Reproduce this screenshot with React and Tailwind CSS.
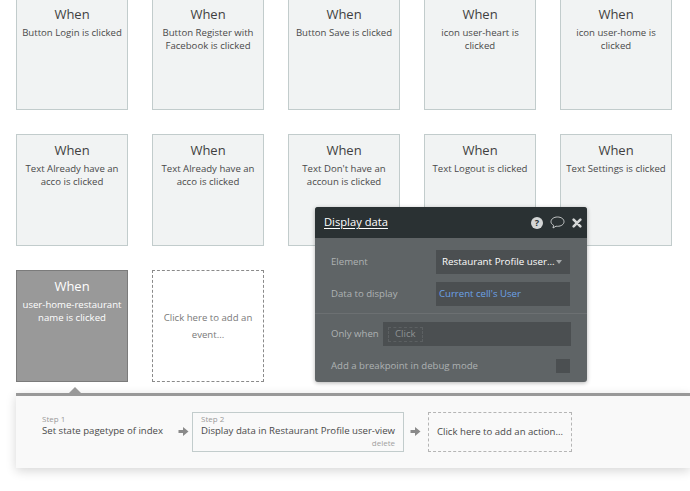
import React from "react";

const cards = [
  "Button Login is clicked",
  "Button Register with Facebook is clicked",
  "Button Save is clicked",
  "icon user-heart is clicked",
  "icon user-home is clicked",
  "Text Already have an acco is clicked",
  "Text Already have an acco is clicked",
  "Text Don't have an accoun is clicked",
  "Text Logout is clicked",
  "Text Settings is clicked",
];

function Card({ label }) {
  return (
    <div className="w-[112px] h-[112px] bg-[#f1f3f3] border border-[#c2cccc] flex flex-col items-center text-center pt-[6px] text-[#4a4a4a]">
      <div className="text-[13px] leading-[18px] text-[#3f3f3f]">When</div>
      <div className="w-[106px] text-[9.6px] leading-[13px] mt-[3px]">{label}</div>
    </div>
  );
}

function Arrow() {
  return (
    <svg width="11" height="11" viewBox="0 0 11 11" className="shrink-0">
      <path d="M0.5 4 H5 V1 L10.5 5.5 L5 10 V7 H0.5 Z" fill="#8a8a8a" />
    </svg>
  );
}

export default function App() {
  return (
    <div className="relative w-[690px] h-[491px] overflow-hidden bg-white font-['Open_Sans',sans-serif]">
      <div className="grid grid-cols-[repeat(5,112px)] gap-x-[24px] gap-y-[24px] pl-[16px] -mt-[2px]">
        {cards.map((c, i) => (
          <Card key={i} label={c} />
        ))}
        <div className="w-[112px] h-[112px] bg-[#999999] border border-[#7b7b7b] flex flex-col items-center text-center pt-[6px] text-white">
          <div className="text-[13px] leading-[18px]">When</div>
          <div className="w-[106px] text-[9.6px] leading-[13px] mt-[3px]">user-home-restaurant name is clicked</div>
        </div>
        <div className="w-[112px] h-[112px] bg-white border border-dashed border-[#8a8a8a] flex items-center justify-center text-center px-[8px] text-[9.6px] leading-[17px] text-[#7a7a7a]">
          Click here to add an event...
        </div>
      </div>

      <div className="relative mt-[11px] ml-[16px] w-[674px] h-[75px] bg-[#f9f9f9] border-t-[3px] border-[#999999] shadow-[0_3px_10px_rgba(0,0,0,0.16)] flex items-start">
        <div className="absolute left-[53px] -top-[9px] w-0 h-0 border-x-[6px] border-x-transparent border-b-[6px] border-b-[#999999]" />
        <div className="w-[162px] pl-[26px] pt-[18px] shrink-0">
          <div className="text-[8px] leading-[10px] text-[#9a9a9a]">Step 1</div>
          <div className="text-[9.6px] leading-[14px] text-[#4a4a4a] whitespace-nowrap">Set state pagetype of index</div>
        </div>
        <div className="mt-[30px] mr-[3px]"><Arrow /></div>
        <div className="mt-[16px] w-[212px] h-[40px] border border-[#c2cccc] pl-[8px] pr-[8px] shrink-0">
          <div className="text-[8px] leading-[10px] text-[#9a9a9a] mt-[1px]">Step 2</div>
          <div className="text-[9.6px] leading-[14px] text-[#4a4a4a] whitespace-nowrap">Display data in Restaurant Profile user-view</div>
          <div className="text-[8px] leading-[10px] text-[#a0a0a0] text-right">delete</div>
        </div>
        <div className="mt-[30px] ml-[6px] mr-[7px]"><Arrow /></div>
        <div className="mt-[16px] w-[144px] h-[40px] border border-dashed border-[#b5b5b5] flex items-center justify-center text-[9.6px] text-[#4a4a4a] shrink-0">
          Click here to add an action...
        </div>
      </div>

      <div className="absolute left-[315px] top-[207px] w-[272px] h-[175px] rounded-[3px] bg-[#5f6466] shadow-[0_1px_4px_rgba(0,0,0,0.3)] overflow-hidden">
        <div className="h-[31px] bg-[#2a3133] flex items-center pl-[9px] pr-[5px]">
          <span className="text-[11.2px] text-white underline underline-offset-2">Display data</span>
          <div className="ml-auto flex items-center">
            <svg width="12" height="12" viewBox="0 0 13 13">
              <circle cx="6.5" cy="6.5" r="6.5" fill="#d4d6d6" />
              <text x="6.5" y="10" textAnchor="middle" fontSize="10" fontWeight="700" fill="#2a3133" fontFamily="'Open Sans',sans-serif">?</text>
            </svg>
            <svg width="15" height="13" viewBox="0 0 15 13" className="ml-[7px]">
              <path d="M7.5 1 C11.2 1 14 3 14 5.7 C14 8.4 11.2 10.3 7.5 10.3 C7 10.3 6.5 10.3 6 10.2 L3 12 L3.6 9.3 C2 8.4 1 7.2 1 5.7 C1 3 3.8 1 7.5 1 Z" fill="none" stroke="#d4d6d6" strokeWidth="0.9" />
            </svg>
            <svg width="10" height="10" viewBox="0 0 11 11" className="ml-[7px]">
              <path d="M1.8 1.8 L9.2 9.2 M9.2 1.8 L1.8 9.2" stroke="#d4d6d6" strokeWidth="2.8" strokeLinecap="round" />
            </svg>
          </div>
        </div>
        <div className="pl-[16px] pr-[16px] pt-[12px]">
          <div className="flex items-center h-[24px]">
            <span className="w-[105px] text-[9.6px] text-[#aeb2b3]">Element</span>
            <div className="w-[134px] h-[24px] bg-[#4b4f51] flex items-center pl-[6px] pr-[8px] text-[9.8px] text-white">
              <span className="whitespace-nowrap">Restaurant Profile user...</span>
              <span className="ml-auto w-0 h-0 border-x-[3.5px] border-x-transparent border-t-[4px] border-t-[#a5a9aa]" />
            </div>
          </div>
          <div className="flex items-center h-[24px] mt-[8px]">
            <span className="w-[105px] text-[9.6px] text-[#aeb2b3]">Data to display</span>
            <div className="w-[134px] h-[24px] bg-[#4b4f51] flex items-center pl-[3px] text-[9.6px] text-[#6ba2e6]">Current cell's User</div>
          </div>
        </div>
        <div className="h-px bg-[#6c7072] mt-[7px]" />
        <div className="pl-[16px] pr-[16px] pt-[8px]">
          <div className="flex items-center h-[24px]">
            <span className="w-[52px] text-[9.6px] text-[#aeb2b3] whitespace-nowrap">Only when</span>
            <div className="w-[188px] h-[24px] bg-[#4b4f51] flex items-center pl-[5px]">
              <span className="border border-dashed border-[#5c6062] px-[6px] h-[15px] flex items-center text-[9.6px] text-[#8e9293]">Click</span>
            </div>
          </div>
          <div className="flex items-center justify-between h-[14px] mt-[13px]">
            <span className="text-[9.6px] text-[#aeb2b3]">Add a breakpoint in debug mode</span>
            <span className="w-[14px] h-[14px] bg-[#4b4f51] mr-px" />
          </div>
        </div>
      </div>
    </div>
  );
}
